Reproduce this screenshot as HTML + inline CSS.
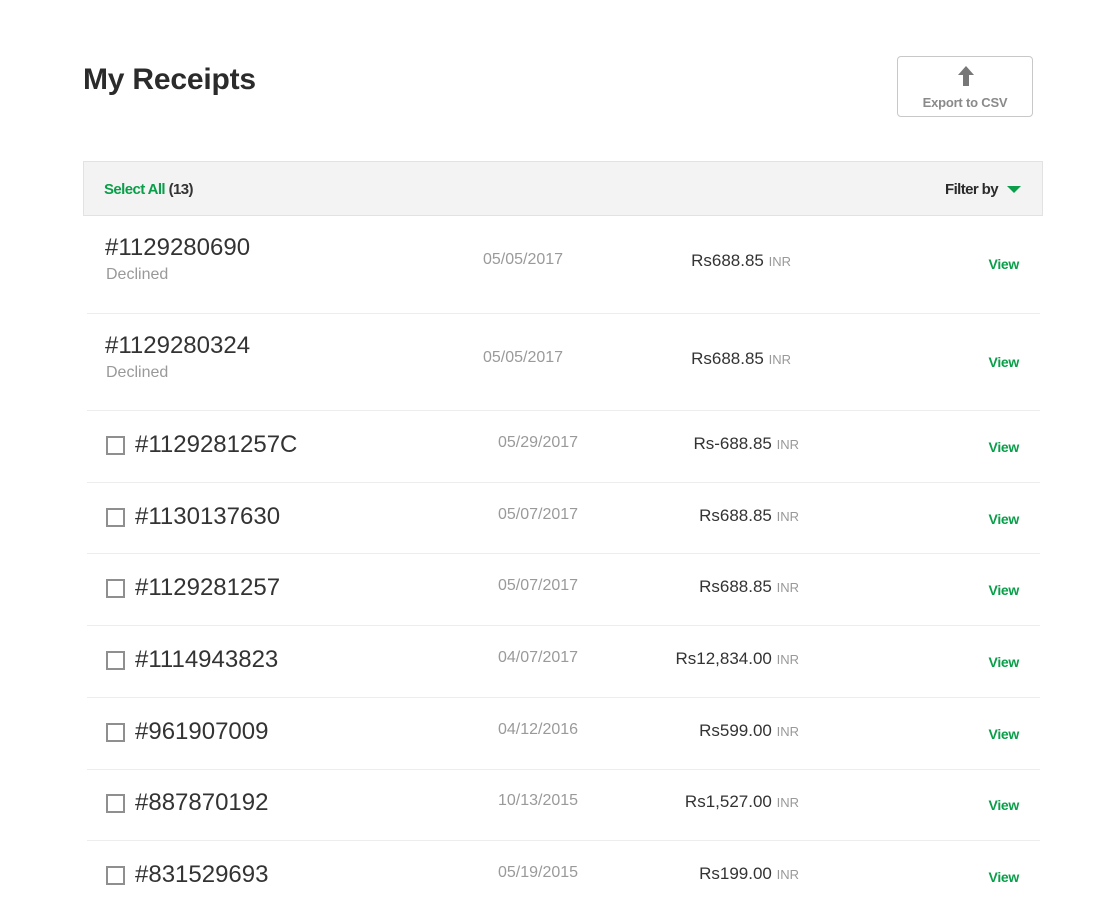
<!DOCTYPE html>
<html><head><meta charset="utf-8"><style>
body{margin:0;background:#fff;font-family:"Liberation Sans",Arial,sans-serif;width:1118px;height:908px;position:relative;overflow:hidden}
.a{position:absolute;white-space:nowrap}
h1{position:absolute;left:83px;top:63px;margin:0;font-size:30px;font-weight:bold;color:#2b2b2b;letter-spacing:-0.2px}
.btn{position:absolute;left:897px;top:56px;width:136px;height:61px;border:1px solid #c8c8c8;border-radius:4px;box-sizing:border-box}
.bar{position:absolute;left:83px;top:161px;width:960px;height:55px;background:#f3f3f3;border:1px solid #e2e2e2;box-sizing:border-box}
.id{font-size:24px;color:#333}
.dec{font-size:16px;color:#999}
.dt{font-size:16px;color:#9a9a9a}
.amt{font-size:17px;color:#333;text-align:right}
.amt span{font-size:13px;color:#999}
.v{font-size:14px;font-weight:bold;color:#0a9e4a;right:99px;letter-spacing:-0.3px}
.sep{position:absolute;left:87px;width:953px;height:1px;background:#ededed}
.cb{position:absolute;left:106px;width:19px;height:19px;border:2px solid #8f8f8f;box-sizing:border-box}
</style></head><body>
<h1>My Receipts</h1>
<div class="btn">
<svg class="a" style="left:58px;top:8px" width="20" height="22" viewBox="0 0 20 22"><path d="M10 1 L18 10 H13 V21 H7 V10 H2 Z" fill="#777"/></svg>
<div class="a" style="left:0;width:134px;text-align:center;top:38px;font-size:13px;font-weight:bold;color:#8a8a8a;letter-spacing:-0.2px">Export to CSV</div>
</div>
<div class="bar">
<div class="a" style="left:20px;top:19px;font-size:15px;font-weight:bold;letter-spacing:-0.6px"><span style="color:#0a9e4a">Select All</span> <span style="color:#333">(13)</span></div>
<div class="a" style="right:44px;top:19px;font-size:15px;font-weight:bold;color:#2b2b2b;letter-spacing:-0.6px">Filter by</div>
<svg class="a" style="right:21px;top:24px" width="14" height="8"><path d="M0 0H14L7 7Z" fill="#0a9e4a"/></svg>
</div>

<div class="a id" style="left:105px;top:234px">#1129280690</div>
<div class="a dec" style="left:106px;top:266px">Declined</div>
<div class="a dt" style="left:483px;top:251px">05/05/2017</div>
<div class="a amt" style="right:327px;top:251px">Rs688.85 <span>INR</span></div>
<div class="a v" style="top:256px">View</div>
<div class="sep" style="top:313px"></div>

<div class="a id" style="left:105px;top:332px">#1129280324</div>
<div class="a dec" style="left:106px;top:364px">Declined</div>
<div class="a dt" style="left:483px;top:349px">05/05/2017</div>
<div class="a amt" style="right:327px;top:349px">Rs688.85 <span>INR</span></div>
<div class="a v" style="top:354px">View</div>
<div class="sep" style="top:410px"></div>

<div class="cb" style="top:436px"></div><div class="a id" style="left:135px;top:431px">#1129281257C</div>
<div class="a dt" style="left:498px;top:434px">05/29/2017</div>
<div class="a amt" style="right:319px;top:434px">Rs-688.85 <span>INR</span></div>
<div class="a v" style="top:439px">View</div>
<div class="sep" style="top:482px"></div>

<div class="cb" style="top:508px"></div><div class="a id" style="left:135px;top:503px">#1130137630</div>
<div class="a dt" style="left:498px;top:506px">05/07/2017</div>
<div class="a amt" style="right:319px;top:506px">Rs688.85 <span>INR</span></div>
<div class="a v" style="top:511px">View</div>
<div class="sep" style="top:553px"></div>

<div class="cb" style="top:579px"></div><div class="a id" style="left:135px;top:574px">#1129281257</div>
<div class="a dt" style="left:498px;top:577px">05/07/2017</div>
<div class="a amt" style="right:319px;top:577px">Rs688.85 <span>INR</span></div>
<div class="a v" style="top:582px">View</div>
<div class="sep" style="top:625px"></div>

<div class="cb" style="top:651px"></div><div class="a id" style="left:135px;top:646px">#1114943823</div>
<div class="a dt" style="left:498px;top:649px">04/07/2017</div>
<div class="a amt" style="right:319px;top:649px">Rs12,834.00 <span>INR</span></div>
<div class="a v" style="top:654px">View</div>
<div class="sep" style="top:697px"></div>

<div class="cb" style="top:723px"></div><div class="a id" style="left:135px;top:718px">#961907009</div>
<div class="a dt" style="left:498px;top:721px">04/12/2016</div>
<div class="a amt" style="right:319px;top:721px">Rs599.00 <span>INR</span></div>
<div class="a v" style="top:726px">View</div>
<div class="sep" style="top:769px"></div>

<div class="cb" style="top:794px"></div><div class="a id" style="left:135px;top:789px">#887870192</div>
<div class="a dt" style="left:498px;top:792px">10/13/2015</div>
<div class="a amt" style="right:319px;top:792px">Rs1,527.00 <span>INR</span></div>
<div class="a v" style="top:797px">View</div>
<div class="sep" style="top:840px"></div>

<div class="cb" style="top:866px"></div><div class="a id" style="left:135px;top:861px">#831529693</div>
<div class="a dt" style="left:498px;top:864px">05/19/2015</div>
<div class="a amt" style="right:319px;top:864px">Rs199.00 <span>INR</span></div>
<div class="a v" style="top:869px">View</div>
</body></html>
